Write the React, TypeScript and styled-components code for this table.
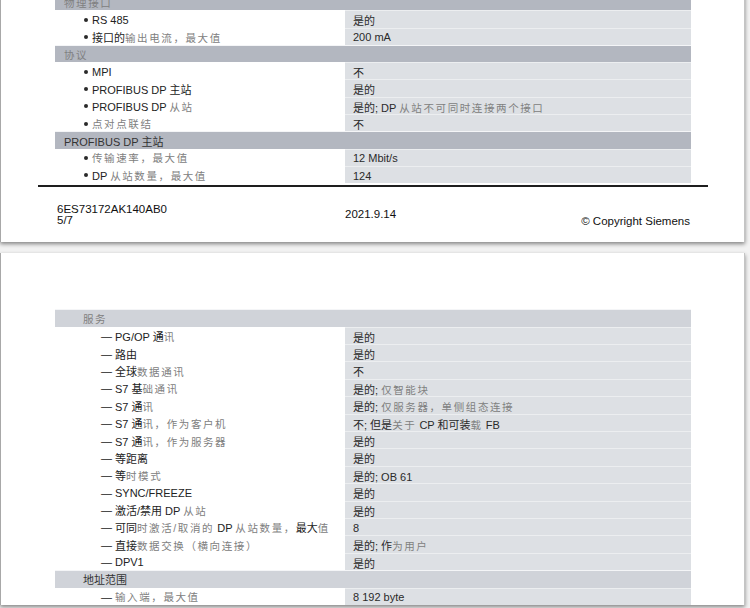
import styled, { createGlobalStyle } from 'styled-components';

type Row = {
  kind: 'band' | 'item';
  label: string;
  value?: string;
};

const pageOne: Row[] = [
  { kind: 'band', label: '{物理接口}' },
  { kind: 'item', label: 'RS 485', value: '是的' },
  { kind: 'item', label: '接口的{输出电流，最大值}', value: '200 mA' },
  { kind: 'band', label: '{协议}' },
  { kind: 'item', label: 'MPI', value: '不' },
  { kind: 'item', label: 'PROFIBUS DP 主站', value: '是的' },
  { kind: 'item', label: 'PROFIBUS DP {从站}', value: '是的; DP {从站不可同时连接两个接口}' },
  { kind: 'item', label: '{点对点联结}', value: '不' },
  { kind: 'band', label: 'PROFIBUS DP 主站' },
  { kind: 'item', label: '{传输速率，最大值}', value: '12 Mbit/s' },
  { kind: 'item', label: 'DP {从站数量，最大值}', value: '124' },
];

const pageTwo: Row[] = [
  { kind: 'band', label: '{服务}' },
  { kind: 'item', label: 'PG/OP 通{讯}', value: '是的' },
  { kind: 'item', label: '路由', value: '是的' },
  { kind: 'item', label: '全球{数据通讯}', value: '不' },
  { kind: 'item', label: 'S7 基{础通讯}', value: '是的; {仅智能块}' },
  { kind: 'item', label: 'S7 通{讯}', value: '是的; {仅服务器，单侧组态连接}' },
  { kind: 'item', label: 'S7 通{讯，作为客户机}', value: '不; 但是{关于} CP 和可装{载} FB' },
  { kind: 'item', label: 'S7 通{讯，作为服务器}', value: '是的' },
  { kind: 'item', label: '等距离', value: '是的' },
  { kind: 'item', label: '等{时模式}', value: '是的; OB 61' },
  { kind: 'item', label: 'SYNC/FREEZE', value: '是的' },
  { kind: 'item', label: '激活/禁用 DP {从站}', value: '是的' },
  { kind: 'item', label: '可同{时激活/取消的} DP {从站数量，}最大{值}', value: '8' },
  { kind: 'item', label: '直接{数据交换（横向连接）}', value: '是的; 作{为用户}' },
  { kind: 'item', label: 'DPV1', value: '是的' },
  { kind: 'band', label: '地址范围' },
  { kind: 'item', label: '{输入端，最大值}', value: '8 192 byte' },
];

const GlobalStyle = createGlobalStyle`
  html, body {
    margin: 0;
    padding: 0;
    background: #f2f2f2;
    overflow: hidden;
  }
  body {
    font-family: "Liberation Sans", "Noto Sans CJK SC", sans-serif;
    font-size: 11px;
    color: #222;
  }
`;

const Viewer = styled.div`
  width: 750px;
  height: 608px;
  overflow: hidden;
  display: flex;
  flex-direction: column;
  gap: 11px;
`;

const Page = styled.section<{ $first?: boolean }>`
  width: 745px;
  box-sizing: border-box;
  background: #fff;
  border-left: 1px solid #a8a8a8;
  border-right: 1px solid #c4c4c4;
  box-shadow: 0 2px 4px rgba(0, 0, 0, 0.45);
  margin-top: ${p => (p.$first ? '-7px' : '0')};
  padding-top: ${p => (p.$first ? '0' : '56px')};
  flex-shrink: 0;
`;

const Table = styled.div`
  margin: 0 53px 0 54px;
  display: flex;
  flex-direction: column;
`;

const Band = styled.div<{ $tone: 'dark' | 'light'; $indent: number; $rowH: number }>`
  height: ${p => p.$rowH}px;
  display: flex;
  align-items: center;
  padding-left: ${p => p.$indent}px;
  background: ${p => (p.$tone === 'dark' ? '#b3b7c0' : '#d0d3d9')};
  color: #333;
  border-top: 1px solid #f4f5f7;
  box-sizing: border-box;
`;

const Line = styled.div<{ $rowH: number }>`
  height: ${p => p.$rowH}px;
  display: grid;
  grid-template-columns: 289px 1fr;
`;

const Label = styled.div<{ $indent: number }>`
  display: flex;
  align-items: center;
  padding-left: ${p => p.$indent}px;
  padding-top: 1px;
  white-space: nowrap;
  color: #222;
`;

const Value = styled.div`
  display: flex;
  align-items: center;
  padding-left: 8px;
  padding-top: 1px;
  background: #dde0e4;
  border-top: 1px solid #eceef0;
  margin-left: 1px;
  white-space: nowrap;
  color: #2a2a2a;
`;

const Text = styled.span`
  white-space: pre;
`;

const Bullet = styled.span`
  display: inline-block;
  width: 4px;
  height: 4px;
  border-radius: 50%;
  background: #2a2a2a;
  margin: 0 4px 0 1px;
`;

const Dash = styled.span`
  display: inline-block;
  width: 14px;
  color: #222;
`;

const Dim = styled.span`
  color: #808080;
  letter-spacing: 1.6px;
  font-size: 10.5px;
`;

const Rule = styled.div`
  margin: 2px 36px 0 37px;
  height: 2px;
  background: #1e1e1e;
`;

const Footer = styled.footer`
  height: 55px;
  display: grid;
  grid-template-columns: 288px 1fr auto;
  padding: 0 54px 0 56px;
  color: #111;
`;

const FootCell = styled.div<{ $top: number }>`
  padding-top: ${p => p.$top}px;
  line-height: 11px;
  font-size: 11.5px;
`;

const rich = (text: string) => (
  <Text>
    {text.split(/(\{[^}]*\})/).filter(Boolean).map((part, i) =>
      part.startsWith('{') ? <Dim key={i}>{part.slice(1, -1)}</Dim> : <span key={i}>{part}</span>
    )}
  </Text>
);

const SpecTable = ({ rows, tone, dash, rowH }: { rows: Row[]; tone: 'dark' | 'light'; dash?: boolean; rowH: number }) => (
  <Table>
    {rows.map((row, i) =>
      row.kind === 'band' ? (
        <Band key={i} $tone={tone} $indent={dash ? 28 : 9} $rowH={rowH}>
          {rich(row.label)}
        </Band>
      ) : (
        <Line key={i} $rowH={rowH}>
          <Label $indent={dash ? 46 : 28}>
            {dash ? <Dash>—</Dash> : <Bullet />}
            {rich(row.label)}
          </Label>
          <Value>{rich(row.value ?? '')}</Value>
        </Line>
      )
    )}
  </Table>
);

const App = () => (
  <>
    <GlobalStyle />
    <Viewer>
      <Page $first>
        <SpecTable rows={pageOne} tone="dark" rowH={17.3} />
        <Rule />
        <Footer>
          <FootCell $top={17}>
            6ES73172AK140AB0
            <br />
            5/7
          </FootCell>
          <FootCell $top={22}>2021.9.14</FootCell>
          <FootCell $top={29}>© Copyright Siemens</FootCell>
        </Footer>
      </Page>
      <Page>
        <SpecTable rows={pageTwo} tone="light" dash rowH={17.4} />
      </Page>
    </Viewer>
  </>
);

export default App;
